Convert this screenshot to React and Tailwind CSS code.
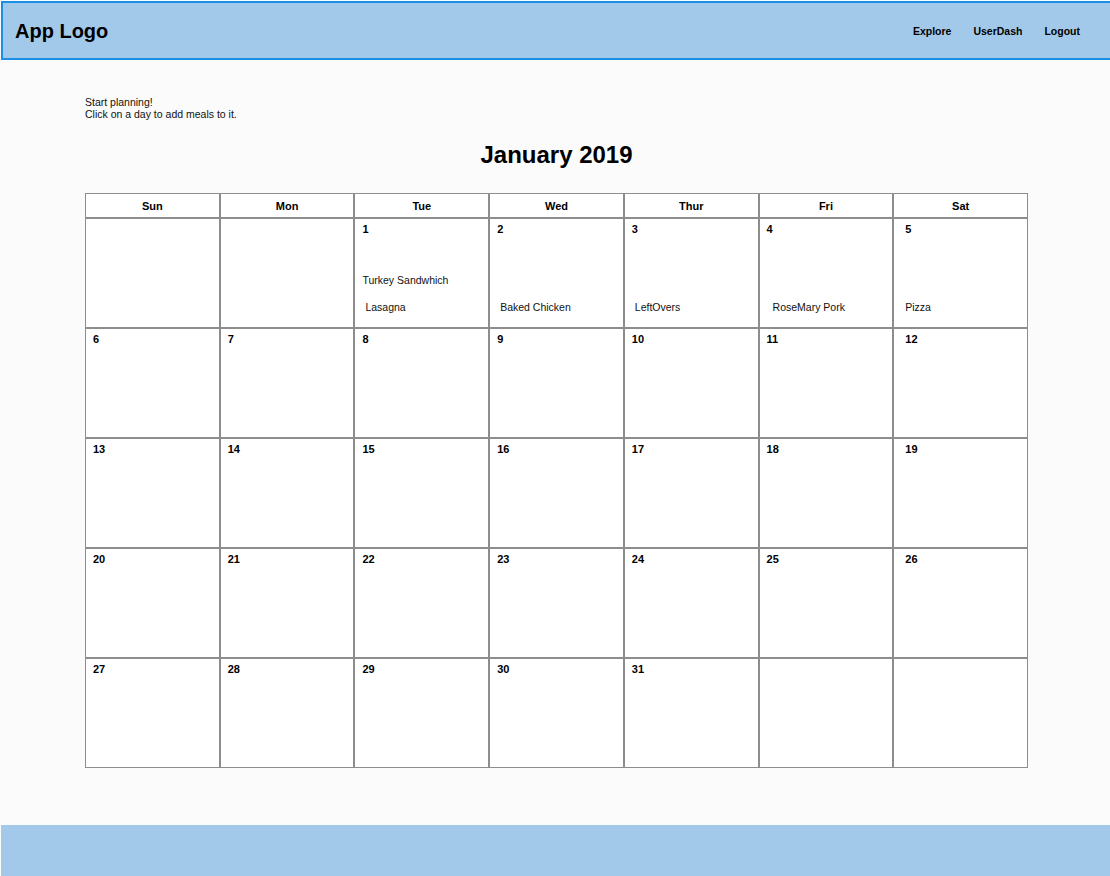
import React from 'react';

const days = ['Sun', 'Mon', 'Tue', 'Wed', 'Thur', 'Fri', 'Sat'];

// January 2019 starts on a Tuesday
const meals = {
    1: [{ name: 'Turkey Sandwhich', pl: 'pl-[7px]' }, { name: 'Lasagna', pl: 'pl-[10px]' }],
    2: [{ name: 'Baked Chicken', pl: 'pl-[10px]' }],
    3: [{ name: 'LeftOvers', pl: 'pl-[10px]' }],
    4: [{ name: 'RoseMary Pork', pl: 'pl-[13px]' }],
    5: [{ name: 'Pizza', pl: 'pl-[11px]' }],
};

const cells = [];
for (let i = 0; i < 35; i++) {
    const d = i - 1;
    cells.push(d >= 1 && d <= 31 ? d : null);
}

const DayCell = ({ day, col }) => {
    const list = day ? meals[day] || [] : [];
    return (
        <div className="h-[110px] border border-[#8d8d8d] bg-white flex flex-col cursor-pointer">
            {day && (
                <div className={`pt-[4px] text-[11px] leading-[12px] font-bold text-black ${col === 6 ? 'pl-[11px]' : 'pl-[7px]'}`}>
                    {day}
                </div>
            )}
            {list.length > 0 && (
                <div className="mt-auto flex flex-col gap-[15px] pb-[14px]">
                    {list.map((m) => (
                        <div key={m.name} className={`text-[10.5px] leading-[12px] text-[#111] ${m.pl}`}>
                            {m.name}
                        </div>
                    ))}
                </div>
            )}
        </div>
    );
};

const App = () => {
    return (
        <div className="min-h-[876px] bg-[#fbfbfb] pt-px flex flex-col font-['Liberation_Sans',Arial,sans-serif] text-black">
            {/* Header */}
            <header className="ml-px h-[59px] bg-[#a3c9ea] border-2 border-r-0 border-[#1b8fe4] flex items-center justify-between pl-[12px] pr-[30px]">
                <h1 className="text-[20px] font-bold leading-none pt-px">App Logo</h1>
                <nav className="flex items-center gap-[22px] text-[10.5px] font-bold pt-[2px]">
                    <a>Explore</a>
                    <a>UserDash</a>
                    <a>Logout</a>
                </nav>
            </header>

            {/* Main */}
            <main className="flex-1">
                <div className="w-[943px] ml-[85px]">
                    <div className="mt-[36px] text-[10.5px] leading-[12px] text-[#111]">
                        <p>Start planning!</p>
                        <p>Click on a day to add meals to it.</p>
                    </div>
                    <h2 className="mt-[21px] text-[24px] leading-[28px] font-bold text-center">January 2019</h2>
                    <div className="mt-[24px] grid grid-cols-7">
                        {days.map((d) => (
                            <div key={d} className="h-[25px] pt-px border border-[#8d8d8d] bg-white flex items-center justify-center text-[11px] font-bold">
                                {d}
                            </div>
                        ))}
                        {cells.map((day, i) => (
                            <DayCell key={i} day={day} col={i % 7} />
                        ))}
                    </div>
                </div>
            </main>

            {/* Footer */}
            <footer className="ml-px h-[51px] bg-[#a3c9ea]" />
        </div>
    );
};

export default App;
